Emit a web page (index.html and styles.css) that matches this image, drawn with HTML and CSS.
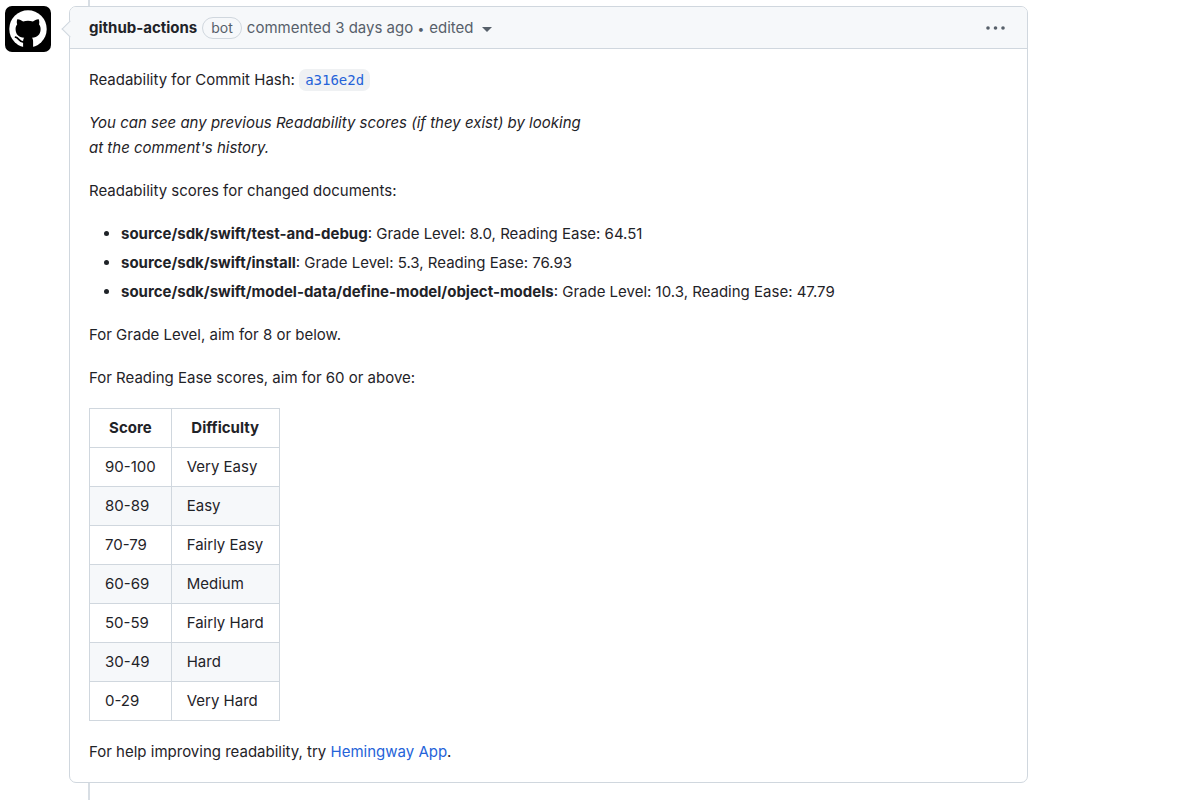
FILE: index.html
```html
<!DOCTYPE html>
<html lang="en">
<head>
<meta charset="utf-8">
<title>Readability comment</title>
<link rel="stylesheet" href="styles.css">
</head>
<body>
<main class="timeline">
  <a class="avatar" href="#" aria-label="github-actions">
    <svg viewBox="0 0 46 46" width="46" height="46" aria-hidden="true">
      <circle cx="23" cy="23" r="18.7" fill="#fff"/>
      <path d="M12.3 13.2c1.9-.2 4.1 1 5.8 2.2 3.2-.8 6.600-.8 9.800 0 1.700-1.200 3.900-2.400 5.800-2.200.8 1.900.7 3.700.3 5.100 1.200 1.500 1.700 3.200 1.600 5.200-.2 5.100-3 7.500-8.600 8.300.8 1 1.100 2.200 1.100 3.600V42h-10V35.400c0-1.400.3-2.600 1.100-3.600-5.600-.8-8.400-3.200-8.600-8.300-.1-2 .4-3.700 1.600-5.200-.5-1.400-.6-3.200.1-5.100Z"/>
      <path d="M10.600 31.200c3.300.200 3 5.200 8.400 4.900" fill="none" stroke="#000" stroke-width="1.8" stroke-linecap="round"/>
    </svg>
  </a>
  <div class="thread">
    <article class="comment">
      <header class="comment-header">
        <a class="author" href="#">github-actions</a>
        <span class="label">bot</span>
        <span class="meta">commented 3 days ago <span class="dot">•</span></span>
        <button class="edited" type="button">edited <span class="caret"></span></button>
        <button class="menu" type="button" aria-label="Show options">
          <svg viewBox="0 0 20 4" width="20" height="4" aria-hidden="true"><circle cx="2" cy="2" r="1.8"/><circle cx="9.5" cy="2" r="1.8"/><circle cx="17" cy="2" r="1.8"/></svg>
        </button>
      </header>
      <div class="comment-body">
        <p>Readability for Commit Hash: <a href="#"><code>a316e2d</code></a></p>
        <p><em>You can see any previous Readability scores (if they exist) by looking<br>at the comment's history.</em></p>
        <p>Readability scores for changed documents:</p>
        <ul>
          <li><strong>source/sdk/swift/test-and-debug</strong>: Grade Level: 8.0, Reading Ease: 64.51</li>
          <li><strong>source/sdk/swift/install</strong>: Grade Level: 5.3, Reading Ease: 76.93</li>
          <li><strong>source/sdk/swift/model-data/define-model/object-models</strong>: Grade Level: 10.3, Reading Ease: 47.79</li>
        </ul>
        <p>For Grade Level, aim for 8 or below.</p>
        <p>For Reading Ease scores, aim for 60 or above:</p>
        <table>
          <thead><tr><th scope="col">Score</th><th scope="col">Difficulty</th></tr></thead>
          <tbody>
            <tr><td>90-100</td><td>Very Easy</td></tr>
            <tr><td>80-89</td><td>Easy</td></tr>
            <tr><td>70-79</td><td>Fairly Easy</td></tr>
            <tr><td>60-69</td><td>Medium</td></tr>
            <tr><td>50-59</td><td>Fairly Hard</td></tr>
            <tr><td>30-49</td><td>Hard</td></tr>
            <tr><td>0-29</td><td>Very Hard</td></tr>
          </tbody>
        </table>
        <p>For help improving readability, try <a href="#">Hemingway App</a>.</p>
      </div>
    </article>
  </div>
</main>
</body>
</html>
```
FILE: styles.css
```css
* { box-sizing: border-box; }
body {
  margin: 0;
  background: #fff;
  color: #1f2328;
  font: 15px/25px Inter, "Liberation Sans", sans-serif;
}
a { color: #2563d9; text-decoration: none; }
button {
  padding: 0;
  border: 0;
  background: none;
  color: inherit;
  font: inherit;
  cursor: pointer;
}
.timeline {
  display: flex;
  align-items: flex-start;
  gap: 18px;
  min-height: 100vh;
  padding: 0 172px 0 5px;
}
.avatar {
  display: grid;
  place-items: center;
  flex: none;
  width: 46px;
  height: 46px;
  margin-top: 6px;
  border-radius: 7px;
  background: #000;
}
.thread {
  position: relative;
  flex: 1;
  align-self: stretch;
  padding-top: 6px;
}
.thread::before {
  content: "";
  position: absolute;
  top: 0;
  bottom: 0;
  left: 19px;
  width: 2px;
  background: #d8dee4;
}
.comment {
  position: relative;
  border: 1px solid #d0d7de;
  border-radius: 7px;
  background: #fff;
}
.comment::before {
  content: "";
  position: absolute;
  top: 16px;
  left: -6px;
  width: 11px;
  height: 11px;
  border: 1px solid #d0d7de;
  border-width: 0 0 1px 1px;
  background: #f6f8fa;
  transform: rotate(45deg);
}
.comment-header {
  display: flex;
  align-items: center;
  gap: 5px;
  height: 42px;
  padding: 0 21px 0 19px;
  border-bottom: 1px solid #d0d7de;
  border-radius: 6px 6px 0 0;
  background: #f6f8fa;
  color: #57606a;
}
.author { color: #1f2328; font-weight: 700; }
.label {
  padding: 0 8px;
  border: 1px solid #d0d7de;
  border-radius: 12px;
  font-size: 14px;
  line-height: 20px;
}
.dot { font-size: 12px; }
.edited { display: flex; align-items: center; gap: 9px; }
.caret {
  margin-top: 4px;
  border: 5px solid transparent;
  border-top-color: currentColor;
  border-bottom: 0;
}
.menu { display: flex; margin-left: auto; }
.menu svg { fill: #57606a; }
.comment-body { padding: 18px 19px; }
p, ul, table { margin: 0 0 18px; }
.comment-body > :last-child { margin-bottom: 0; }
code {
  padding: 3px 6px;
  border-radius: 7px;
  background: #eff1f3;
  font: 14px/16px "DejaVu Sans Mono", monospace;
}
ul { padding-left: 32px; }
li + li { margin-top: 4px; }
strong, th { font-weight: 700; }
table { border-collapse: collapse; }
th, td {
  padding: 7px 15px;
  border: 1px solid #d0d7de;
  line-height: 24px;
  text-align: left;
}
th { text-align: center; }
tbody tr:nth-child(even) { background: #f6f8fa; }
```
